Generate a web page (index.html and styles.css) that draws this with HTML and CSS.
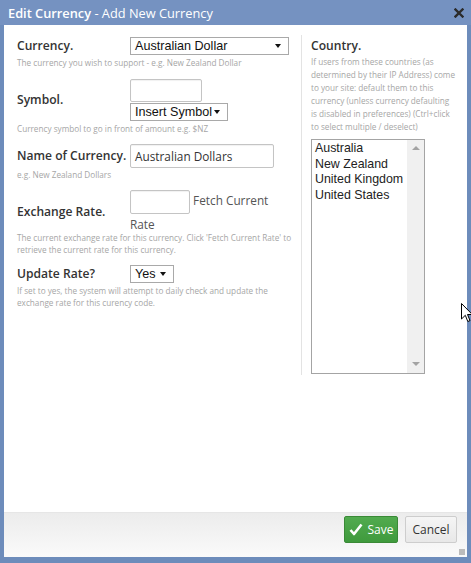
FILE: index.html
```html
<!DOCTYPE html>
<html>
<head>
<meta charset="utf-8">
<link rel="stylesheet" href="styles.css">
</head>
<body>
<div class="dialog">
  <div class="titlebar">
    <span class="title"><b>Edit Currency</b> - Add New Currency</span>
    <svg class="close" width="10" height="10" viewBox="0 0 10 10"><path d="M1.5 1.5 L8.5 8.5 M8.5 1.5 L1.5 8.5" stroke="#2b2b2b" stroke-width="2.4" stroke-linecap="square"/></svg>
  </div>
  <div class="frame">
    <div class="body">
      <div class="left">
        <div class="field f1">
          <label class="lbl">Currency.</label>
          <div class="ctrl"><div class="select s-currency"><span>Australian Dollar</span><i class="arr"></i></div></div>
        </div>
        <p class="help h1">The currency you wish to support - e.g. New Zealand Dollar</p>

        <div class="field f2">
          <label class="lbl">Symbol.</label>
          <div class="ctrl stack">
            <div class="input i-symbol"></div>
            <div class="select s-symbol"><span>Insert Symbol</span><i class="arr"></i></div>
          </div>
        </div>
        <p class="help h2">Currency symbol to go in front of amount e.g. $NZ</p>

        <div class="field f3">
          <label class="lbl">Name of Currency.</label>
          <div class="ctrl"><div class="input i-name">Australian Dollars</div></div>
        </div>
        <p class="help h3">e.g. New Zealand Dollars</p>

        <div class="field f4">
          <label class="lbl">Exchange Rate.</label>
          <div class="ctrl wrap"><span class="input i-rate"></span> <span class="fetch">Fetch Current Rate</span></div>
        </div>
        <p class="help h4">The current exchange rate for this currency. Click 'Fetch Current Rate' to retrieve the current rate for this currency.</p>

        <div class="field f5">
          <label class="lbl">Update Rate?</label>
          <div class="ctrl"><div class="select s-yes"><span>Yes</span><i class="arr"></i></div></div>
        </div>
        <p class="help h5">If set to yes, the system will attempt to daily check and update the exchange rate for this curency code.</p>
      </div>
      <div class="right">
        <div class="lbl country">Country.</div>
        <p class="help rhelp">If users from these countries (as determined by their IP Address) come to your site: default them to this currency (unless currency defaulting is disabled in preferences) (Ctrl+click to select multiple / deselect)</p>
        <div class="listbox">
          <ul class="items">
            <li>Australia</li>
            <li>New Zealand</li>
            <li>United Kingdom</li>
            <li>United States</li>
          </ul>
          <div class="scrollbar">
            <i class="up"></i>
            <i class="down"></i>
          </div>
        </div>
      </div>
    </div>
    <div class="footer">
      <button class="btn save"><svg width="14" height="13" viewBox="0 0 14 13"><path d="M1.5 7 L5 11 L12.5 1.5" fill="none" stroke="#fff" stroke-width="2.6" stroke-linejoin="round"/></svg>Save</button>
      <button class="btn cancel">Cancel</button>
      <span class="grip"></span>
    </div>
  </div>
  <svg class="cursor" width="12" height="20" viewBox="0 0 12 20"><path d="M0.5 0.5 L0.5 16 L4.3 12.3 L6.8 18.5 L9 17.6 L6.5 11.5 L11.3 11.5 Z" fill="#fff" stroke="#000" stroke-width="1"/></svg>
</div>
</body>
</html>
```

FILE: styles.css
```css
html, body {
  margin: 0;
  padding: 0;
}
body {
  width: 471px;
  height: 563px;
  overflow: hidden;
  background: #6f8dbb;
}
.dialog {
  position: relative;
  width: 471px;
  height: 563px;
  display: flex;
  flex-direction: column;
  background: #6d8cbb;
  font-family: "Open Sans", "Liberation Sans", sans-serif;
}
.titlebar {
  height: 25px;
  flex: none;
  display: flex;
  align-items: center;
  justify-content: space-between;
  padding: 0 7px 0 8px;
  background: #7592c1;
  color: #fff;
  font-size: 12.8px;
}
.title b {
  font-weight: 600;
}
.frame {
  flex: 1;
  margin: 0 4px 6px 4px;
  background: #fff;
  display: flex;
  flex-direction: column;
}
.body {
  flex: 1;
  display: flex;
  padding: 10px 0 0 13px;
  align-items: flex-start;
}
.left {
  width: 284px;
  flex: none;
}
.field {
  display: grid;
  grid-template-columns: 113px 1fr;
  align-items: center;
}
.lbl {
  font-weight: 600;
  font-size: 12.1px;
  color: #333;
  line-height: 18px;
  white-space: nowrap;
}
.help {
  margin: 0;
  font-size: 8.2px;
  line-height: 12px;
  color: #a6a6a6;
}
.f1 { margin-top: 2px; }
.h1 { margin-top: 2px; }
.f2 { margin-top: 10px; }
.h2 { margin-top: 2px; }
.f3 { margin-top: 9px; }
.h3 { margin-top: 1px; }
.f4 { margin-top: 9px; }
.h4 { margin-top: -2px; }
.f5 { margin-top: 9px; }
.h5 { margin-top: 2px; }

.stack {
  display: flex;
  flex-direction: column;
  align-items: flex-start;
  gap: 1px;
}
.select {
  box-sizing: border-box;
  height: 18px;
  border: 1px solid #a9a9a9;
  background: #fff;
  display: flex;
  align-items: center;
  justify-content: space-between;
  padding: 0 7px 0 4px;
  font-family: "Liberation Sans", Arial, sans-serif;
  font-size: 12.6px;
  color: #111;
}
.arr {
  width: 0;
  height: 0;
  border-left: 3px solid transparent;
  border-right: 3px solid transparent;
  border-top: 4.5px solid #111;
}
.s-currency { width: 159px; }
.s-symbol { width: 98px; }
.s-yes { width: 44px; }

.input {
  box-sizing: border-box;
  height: 24px;
  border: 1px solid #c4c4c4;
  border-radius: 2px;
  background: #fff;
  box-shadow: inset 0 1px 1px rgba(0,0,0,0.06);
  font-size: 11.8px;
  color: #333;
  padding: 0 4px;
  line-height: 22px;
}
.i-symbol { width: 72px; height: 23px; }
.i-name { width: 144px; }
.wrap {
  width: 160px;
  font-size: 11.8px;
  line-height: 20px;
  color: #555;
}
.i-rate {
  display: inline-block;
  width: 60px;
  vertical-align: middle;
}
.fetch {
  color: #555;
}

.right {
  flex: none;
  width: 156px;
  border-left: 1px solid #e3e3e3;
  padding-left: 9px;
}
.country {
  margin-top: 2px;
}
.rhelp {
  line-height: 13px;
  margin-top: 0;
  width: 146px;
}
.listbox {
  margin-top: 6px;
  box-sizing: border-box;
  width: 114px;
  height: 235px;
  border: 1px solid #a4a4a4;
  display: flex;
  margin-bottom: 1px;
}
.items {
  list-style: none;
  margin: 0;
  padding: 1px 0 0 3px;
  flex: 1;
  font-family: "Liberation Sans", Arial, sans-serif;
  font-size: 12.4px;
  line-height: 15.5px;
  color: #222;
}
.scrollbar {
  width: 17px;
  background: #f0f0f0;
  display: flex;
  flex-direction: column;
  justify-content: space-between;
  align-items: center;
  padding: 6px 0 7px;
}
.up, .down {
  width: 0;
  height: 0;
  border-left: 4px solid transparent;
  border-right: 4px solid transparent;
}
.up { border-bottom: 4px solid #a3a3a3; }
.down { border-top: 4px solid #a3a3a3; }

.footer {
  position: relative;
  flex: none;
  height: 45px;
  box-sizing: border-box;
  border-top: 1px solid #e6e6e6;
  background: linear-gradient(#ececec, #fafafa);
  display: flex;
  justify-content: flex-end;
  align-items: flex-start;
  padding: 3px 10px 0 0;
  gap: 7px;
}
.btn {
  box-sizing: border-box;
  height: 27px;
  margin: 0;
  font-family: "Open Sans", "Liberation Sans", sans-serif;
  font-size: 12px;
  border-radius: 2px;
  display: flex;
  align-items: center;
  justify-content: center;
  padding: 0;
}
.save {
  width: 54px;
  background: linear-gradient(#52ab4f, #3f9a3d);
  border: 1px solid #3a8a37;
  color: #fff;
  gap: 5px;
}
.cancel {
  width: 52px;
  background: linear-gradient(#f5f5f5, #e8e8e8);
  border: 1px solid #cdcdcd;
  color: #333;
}
.grip {
  position: absolute;
  right: 2px;
  bottom: 2px;
  width: 6px;
  height: 6px;
  background: radial-gradient(circle, #b9b9b9 0.7px, transparent 0.9px) 0 0 / 2px 2px;
}
.cursor {
  position: absolute;
  left: 461px;
  top: 303px;
}
```
